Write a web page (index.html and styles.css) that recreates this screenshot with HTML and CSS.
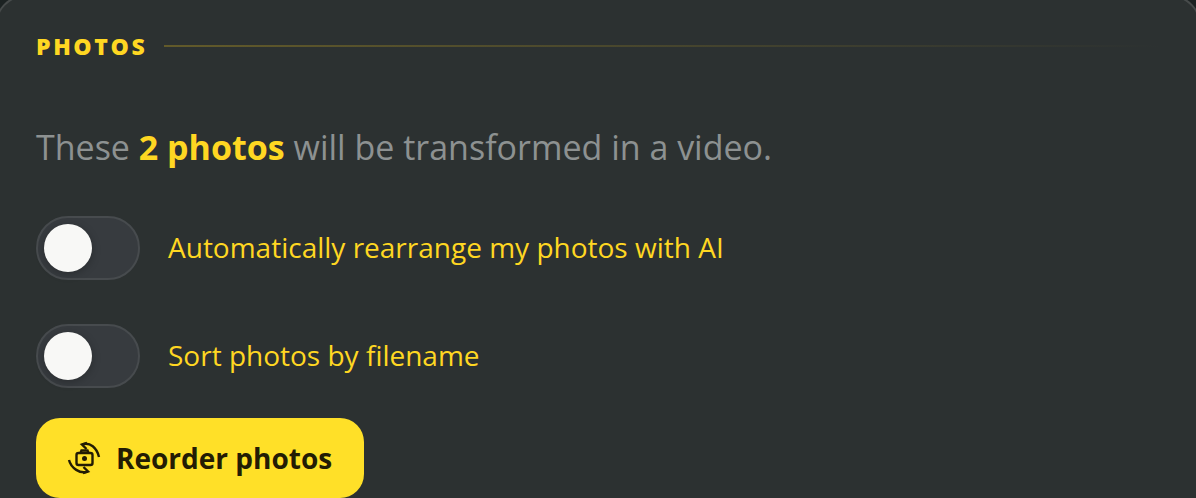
FILE: index.html
```html
<!DOCTYPE html>
<html lang="en">
<head>
    <meta charset="UTF-8">
    <meta name="viewport" content="width=device-width, initial-scale=1.0">
    <title>Photos</title>
    <link rel="stylesheet" href="styles.css">
</head>
<body>
    <div class="card">
        <div class="section-title">
            <h2>PHOTOS</h2>
            <div class="title-line"></div>
        </div>

        <p class="intro">These <strong>2 photos</strong> will be transformed in a video.</p>

        <div class="toggle-row">
            <div class="toggle"><div class="knob"></div></div>
            <span class="toggle-label">Automatically rearrange my photos with AI</span>
        </div>

        <div class="toggle-row">
            <div class="toggle"><div class="knob"></div></div>
            <span class="toggle-label">Sort photos by filename</span>
        </div>

        <button class="reorder">
            <svg class="reorder-icon" viewBox="0 0 32 32" fill="none" stroke="#231c04" stroke-width="2.4">
                <!-- camera -->
                <rect x="8.5" y="11" width="16" height="12" rx="2"/>
                <path d="M12.5 11 L13.5 8.5 H19.5 L20.5 11"/>
                <circle cx="16.5" cy="16.5" r="2.5" fill="#231c04" stroke="none"/>
                <!-- arrows -->
                <path d="M14 2.5 C22 -0.5 29 6 31 15"/>
                <path d="M19 1 L14 2.5 L18.5 7"/>
                <path d="M20 29.5 C12 32.5 3 26 1 18"/>
                <path d="M15 31 L20 29.5 L15.5 25"/>
            </svg>
            Reorder photos
        </button>
    </div>
</body>
</html>
```

FILE: styles.css
```css
* {
    margin: 0;
    padding: 0;
    box-sizing: border-box;
    font-family: 'Open Sans', sans-serif;
}

body {
    height: 498px;
    overflow: hidden;
    background: #1c2222;
}

.card {
    height: 560px;
    margin: -6px;
    padding: 38px 40px 0;
    background: #2c3131;
    border: 2px solid #474b4b;
    border-bottom: none;
    border-radius: 34px 34px 0 0;
}

.section-title {
    display: flex;
    align-items: center;
    gap: 17px;
    height: 24px;
}

.section-title h2 {
    color: #ffd722;
    font-size: 23px;
    font-weight: 800;
    letter-spacing: 2.6px;
    line-height: 24px;
}

.title-line {
    flex: 1;
    height: 2px;
    background: linear-gradient(90deg, #625a2a, rgba(98, 90, 42, 0));
}

.intro {
    margin-top: 68px;
    margin-bottom: 48px;
    color: #8d9191;
    font-size: 34px;
    line-height: 42px;
}

.intro strong {
    color: #ffd722;
    font-weight: 700;
}

.toggle-row {
    display: flex;
    align-items: center;
    gap: 28px;
    height: 64px;
    margin-bottom: 44px;
    color: #ffd722;
    font-size: 28px;
}

.toggle-label {
    padding-bottom: 2px;
}

.toggle {
    width: 104px;
    height: 64px;
    padding: 6px;
    background: #373b3f;
    border: 2px solid #474b4e;
    border-radius: 32px;
}

.knob {
    width: 48px;
    height: 48px;
    background: #f8f8f6;
    border-radius: 50%;
    box-shadow: 0 2px 8px rgba(0, 0, 0, 0.25);
}

.reorder {
    display: flex;
    align-items: center;
    gap: 16px;
    width: 328px;
    height: 80px;
    margin-top: -14px;
    padding-left: 32px;
    background: #ffe028;
    color: #231c04;
    border: none;
    border-radius: 24px;
    font-size: 28px;
    font-weight: 700;
}

.reorder-icon {
    width: 32px;
    height: 32px;
    overflow: visible;
}
```
